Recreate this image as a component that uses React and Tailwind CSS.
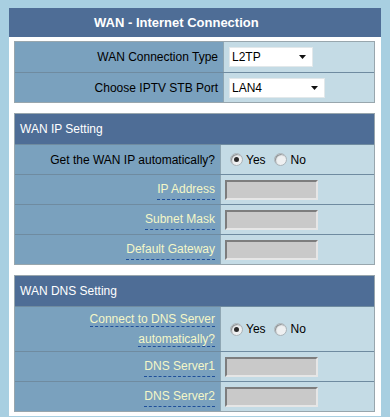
// WAN - Internet Connection settings panel

const Select = ({ value, width }) => (
  <div className={`flex h-[20px] items-center justify-between border border-[#e2e8ea] bg-white pl-[2px] pr-[6px] ${width}`}>
    <span className="text-[12px] text-black">{value}</span>
    <svg width="7" height="4" viewBox="0 0 7 4">
      <path d="M0 0h7L3.5 4z" fill="#111" />
    </svg>
  </div>
);

const TextBox = () => (
  <div className="h-[20px] w-[93px] border-2 border-t-[#7d7d7d] border-l-[#7d7d7d] border-r-[#e6e6e6] border-b-[#e6e6e6] bg-[#c9c9c9]" />
);

const Radio = ({ checked }) => (
  <span className="flex h-[13px] w-[13px] items-center justify-center rounded-full border border-[#a9b3b8] bg-[#eef0f1] shadow-[inset_1px_1px_1px_#8a8f92]">
    {checked && <span className="h-[5px] w-[5px] rounded-full bg-[#2b2b2b]" />}
  </span>
);

const YesNo = () => (
  <div className="flex items-center pl-[9px] text-[12px] text-black">
    <Radio checked />
    <span className="ml-[3px]">Yes</span>
    <span className="ml-[8px]"><Radio /></span>
    <span className="ml-[4px]">No</span>
  </div>
);

const Tip = ({ children }) => (
  <span className="border-b border-dashed border-[#1f4f9a] text-[#f4f7c8]">{children}</span>
);

const Row = ({ label, children, split = "w-[205px]", h = "h-[30px]", first }) => (
  <div className={`flex ${h} ${first ? "" : "border-t border-[#6f8ba0]"}`}>
    <div className={`flex ${split} shrink-0 items-center justify-end bg-[#7aa1be] pr-[5px] text-right text-[12px] leading-[20px] text-black`}>
      {label}
    </div>
    <div className="flex flex-1 items-center border-l border-[#8ea6b3] bg-[#c4dbe5]">{children}</div>
  </div>
);

const SectionHead = ({ title }) => (
  <div className="flex h-[30px] items-center bg-[#4e6d96] pl-[5px] text-[12px] text-white">{title}</div>
);

export default function App() {
  return (
    <div
      className="min-h-[417px] bg-[#a8cfe1] pl-[9px] pt-[8px]"
      style={{ fontFamily: '"Liberation Sans", Arial, sans-serif' }}
    >
      <div className="w-[372px]">
        <div className="flex h-[29px] items-center bg-[#4e6d96] pl-[85px] pt-[1px] text-[13px] font-bold text-white">
          WAN - Internet Connection
        </div>

        <div className="bg-white pb-[4px] pl-[5px] pr-[6px] pt-[4px]">
          <div className="border border-[#98a6ad]">
            <Row label="WAN Connection Type" split="w-[208px]" first>
              <div className="pl-[5px]"><Select value="L2TP" width="w-[84px]" /></div>
            </Row>
            <Row label="Choose IPTV STB Port" split="w-[208px]">
              <div className="pl-[5px]"><Select value="LAN4" width="w-[96px]" /></div>
            </Row>
          </div>

          <div className="mt-[10px] border border-[#98a6ad]">
            <SectionHead title="WAN IP Setting" />
            <Row label="Get the WAN IP automatically?">
              <YesNo />
            </Row>
            <Row label={<Tip>IP Address</Tip>}>
              <div className="pl-[4px]"><TextBox /></div>
            </Row>
            <Row label={<Tip>Subnet Mask</Tip>}>
              <div className="pl-[4px]"><TextBox /></div>
            </Row>
            <Row label={<Tip>Default Gateway</Tip>}>
              <div className="pl-[4px]"><TextBox /></div>
            </Row>
          </div>

          <div className="mt-[10px] border border-[#98a6ad]">
            <SectionHead title="WAN DNS Setting" />
            <Row label={<span className="w-[140px]"><Tip>Connect to DNS Server automatically?</Tip></span>} h="h-[45px]">
              <YesNo />
            </Row>
            <Row label={<Tip>DNS Server1</Tip>}>
              <div className="pl-[4px]"><TextBox /></div>
            </Row>
            <Row label={<Tip>DNS Server2</Tip>}>
              <div className="pl-[4px]"><TextBox /></div>
            </Row>
          </div>
        </div>
      </div>
    </div>
  );
}
